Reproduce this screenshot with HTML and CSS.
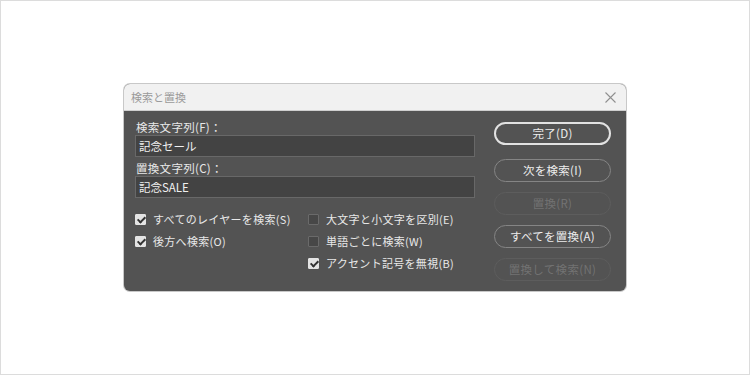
FILE: index.html
```html
<!DOCTYPE html>
<html>
    <head>
        <meta charset="utf-8" />
        <meta name="viewport" content="width=device-width" />
        <title>検索と置換</title>
        <link rel="stylesheet" href="styles.css">
    </head>
    <body>
        <div class="frame">
            <div class="dialog">
                <div class="titlebar">
                    <span class="title">検索と置換</span>
                    <svg class="close" width="11" height="11" viewBox="0 0 11 11">
                        <path d="M0.5 0.5 L10.5 10.5 M10.5 0.5 L0.5 10.5" stroke="#8f8f8f" stroke-width="1.1" fill="none" />
                    </svg>
                </div>
                <div class="content">
                    <div class="fields">
                        <div class="label">検索文字列(F)：</div>
                        <div class="input">記念セール</div>
                        <div class="label second">置換文字列(C)：</div>
                        <div class="input">記念SALE</div>

                        <div class="options">
                            <label class="option"><span class="box checked"></span>すべてのレイヤーを検索(S)</label>
                            <label class="option"><span class="box"></span>大文字と小文字を区別(E)</label>
                            <label class="option"><span class="box checked"></span>後方へ検索(O)</label>
                            <label class="option"><span class="box"></span>単語ごとに検索(W)</label>
                            <span></span>
                            <label class="option"><span class="box checked"></span>アクセント記号を無視(B)</label>
                        </div>
                    </div>
                    <div class="buttons">
                        <div class="btn primary">完了(D)</div>
                        <div class="btn">次を検索(I)</div>
                        <div class="btn disabled">置換(R)</div>
                        <div class="btn">すべてを置換(A)</div>
                        <div class="btn disabled">置換して検索(N)</div>
                    </div>
                </div>
            </div>
        </div>
    </body>
</html>
```

FILE: styles.css
```css
html, body { margin: 0; padding: 0; width: 100%; height: 100%; overflow: hidden; background: #fff }

.frame {
    box-sizing: border-box;
    height: 375px;
    border: 1px solid #dcdcdc;
    padding-top: 83px;
    font-family: "Noto Sans CJK JP", "Noto Sans", sans-serif;
}

.dialog {
    width: 502px;
    margin: 0 auto;
    border-radius: 6px;
    overflow: hidden;
    background: #535353;
    box-shadow: 0 0 0 1px #c8c8c8;
}

.titlebar {
    height: 27px;
    background: #f1f1f1;
    border-bottom: 1px solid #cfcfcf;
    box-sizing: border-box;
    display: flex;
    align-items: center;
    justify-content: space-between;
    padding: 0 10px 0 7px;
}

.title {
    font-size: 11px;
    color: #9a9a9a;
}

.content {
    display: flex;
    height: 180px;
    box-sizing: border-box;
    padding: 9px 15px 0 11px;
}

.fields {
    width: 340px;
}

.label {
    font-size: 11.5px;
    line-height: 15px;
    color: #e8e8e8;
    padding-left: 1px;
    letter-spacing: 0.3px;
}

.label.second {
    margin-top: 4px;
}

.input {
    box-sizing: border-box;
    height: 22px;
    background: #434343;
    border: 1px solid #686868;
    color: #f0f0f0;
    font-size: 11.5px;
    line-height: 20px;
    padding-left: 3px;
}

.options {
    display: grid;
    grid-template-columns: 173px 1fr;
    grid-auto-rows: 22px;
    margin-top: 10px;
}

.option {
    display: flex;
    align-items: center;
    font-size: 11px;
    color: #e8e8e8;
    letter-spacing: 0.3px;
}

.box {
    box-sizing: border-box;
    width: 11px;
    height: 11px;
    margin-right: 7px;
    border: 1px solid #6a6a6a;
    background: #474747;
    border-radius: 1px;
    position: relative;
}

.box.checked {
    background: #e4e4e4;
    border-color: #e4e4e4;
}

.box.checked:after {
    content: "";
    position: absolute;
    left: 3px;
    top: 0px;
    width: 3px;
    height: 6px;
    border: solid #333;
    border-width: 0 2px 2px 0;
    transform: rotate(45deg);
}

.buttons {
    width: 117px;
    margin-left: 19px;
    padding-top: 2px;
}

.btn {
    box-sizing: border-box;
    height: 23px;
    border: 1px solid #858585;
    border-radius: 12px;
    margin-bottom: 10px;
    text-align: center;
    font-size: 11.5px;
    line-height: 21px;
    color: #ececec;
    letter-spacing: 0.3px;
}

.btn.primary {
    border: 2px solid #e2e2e2;
    line-height: 19px;
    margin-bottom: 14px;
}

.btn.disabled {
    border-color: #5d5d5d;
    color: #727272;
}
```
